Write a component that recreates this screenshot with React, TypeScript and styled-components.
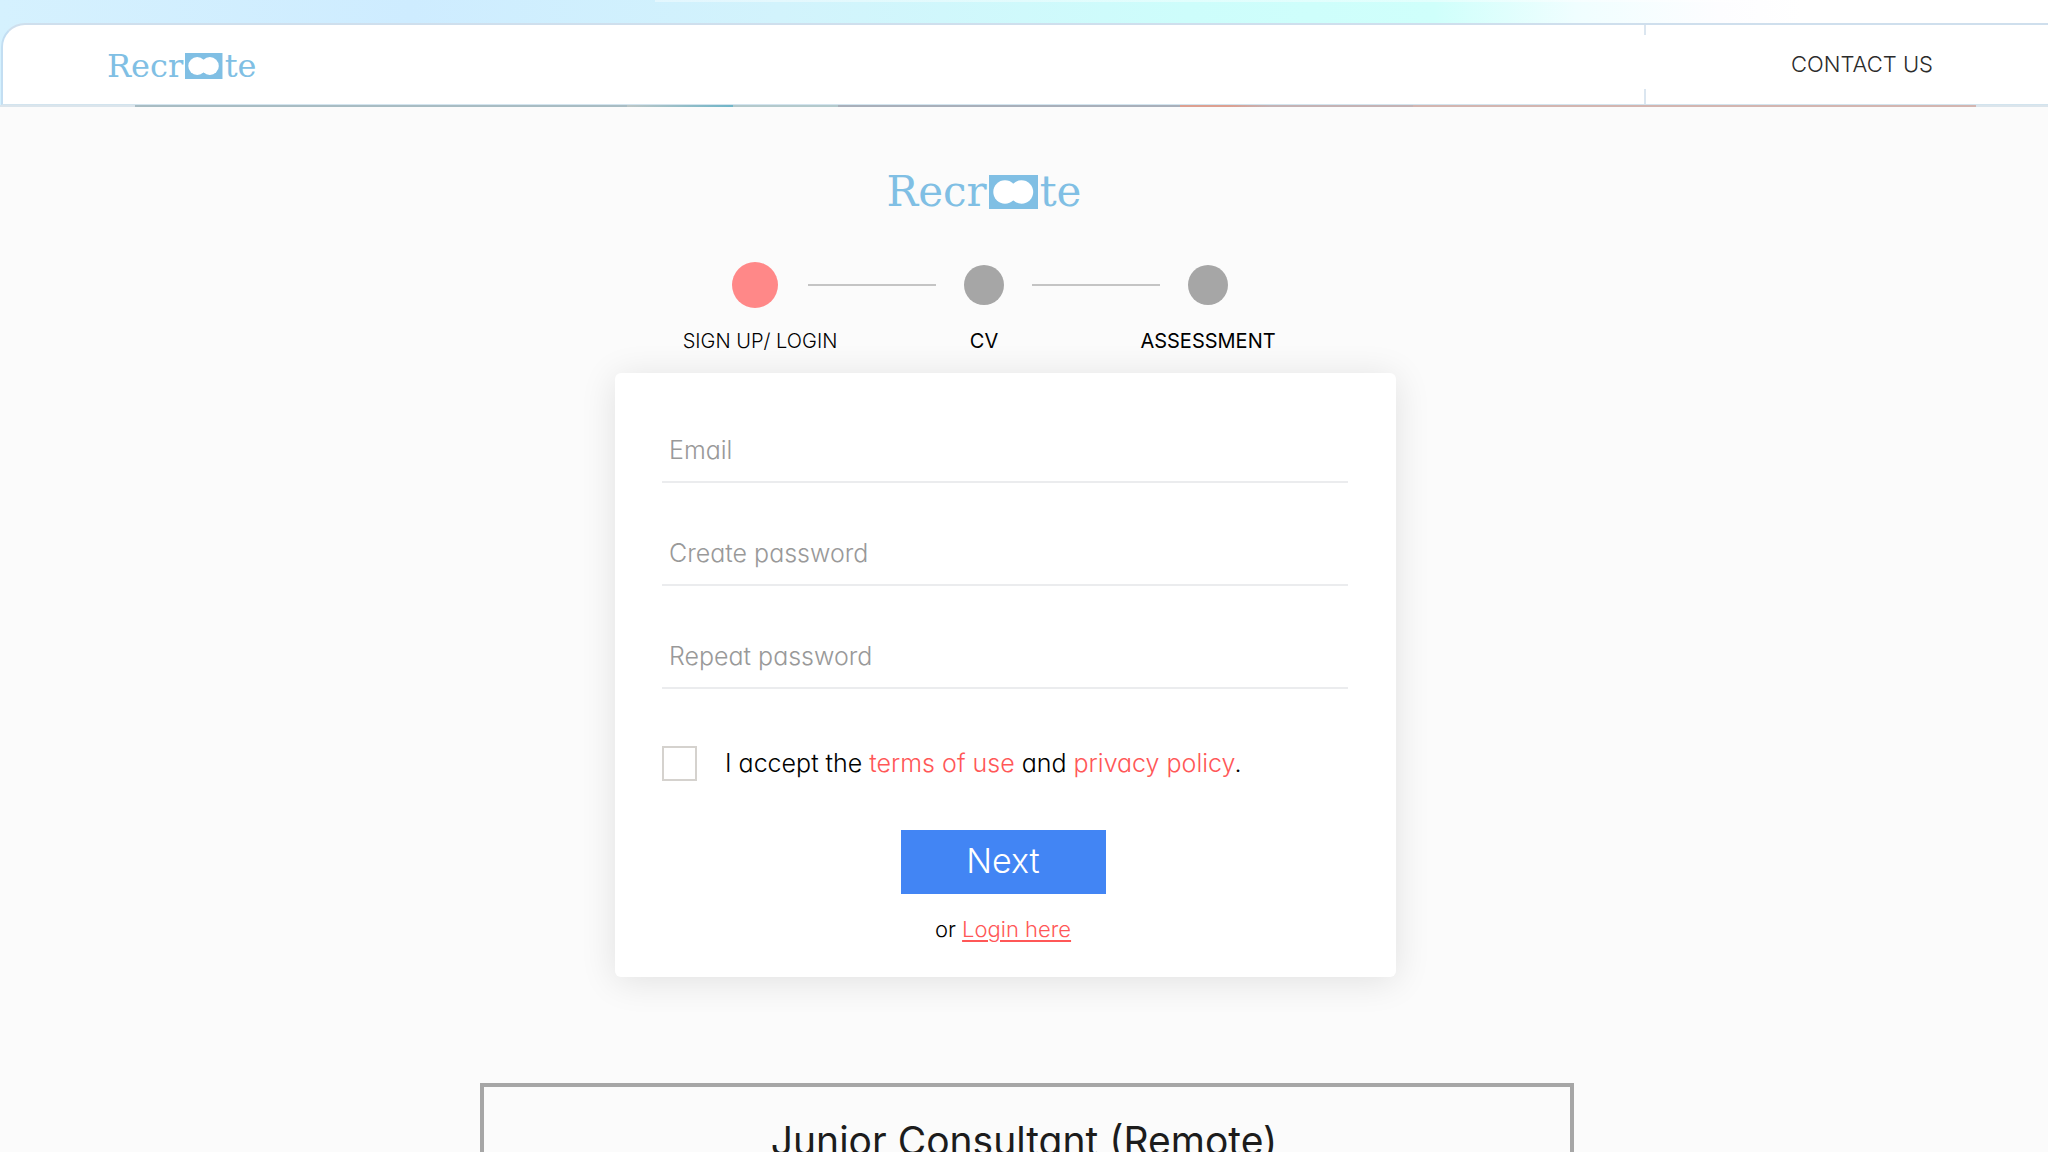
import React from "react";
import styled, { createGlobalStyle } from "styled-components";

const GlobalStyle = createGlobalStyle`
  *, *::before, *::after { box-sizing: border-box; }
  body {
    margin: 0;
    background: #fbfbfb;
    color: #111;
    font-family: Inter, "Open Sans", sans-serif;
    font-feature-settings: "cv11" 1;
    font-weight: 300;
  }
`;

const Header = styled.header`
  padding: 23px 0 0 1px;
  background:
    linear-gradient(rgba(255, 255, 255, 0.4), rgba(255, 255, 255, 0.4)) right top / 68% 2px no-repeat,
    linear-gradient(
      90deg,
      #d5f1fe 0%,
      #ceecff 20%,
      #d2f3fc 38%,
      #cdfdfb 58%,
      #cffffb 70%,
      #f0feff 77%,
      #fdfdff 84%,
      #fff 88%
    );
`;

const Bar = styled.div`
  display: flex;
  justify-content: space-between;
  height: 82px;
  padding-left: 104px;
  background: #fff;
  border-style: solid;
  border-width: 2px 0 1px 2px;
  border-color: #cfdfed #fff #d3e4ee #c3def2;
  border-top-left-radius: 24px;
`;

const HeaderEdge = styled.div`
  height: 2px;
  background: linear-gradient(
    90deg,
    #dbe5ec 0 6.6%,
    #a8bcc3 6.6% 30.6%,
    #bcc6c6 30.6%,
    #6fb5c8 35.8%,
    #b3c9cc 35.8% 40.9%,
    #a8afba 40.9% 57.6%,
    #dd9f90 57.6% 60%,
    #c4b2b4 62% 69%,
    #d3b5b0 69% 96.5%,
    #dbe5ec 96.5%
  );
`;

const Logo = styled.a<{ $size: number }>`
  display: inline-flex;
  align-items: center;
  gap: 2px;
  color: #80bfe4;
  font: 400 ${(p) => p.$size}px/1 "DejaVu Serif", serif;
  text-decoration: none;

  svg {
    display: block;
    height: ${(p) => (p.$size > 36 ? 34 : 26)}px;
  }
`;

const BarLogo = styled.div`
  display: flex;
  padding-top: 3px;
`;

const Contact = styled.nav`
  display: flex;
  align-items: center;
  padding: 0 115px 2px 147px;
  background:
    linear-gradient(#dbe6f0, #dbe6f0) left top / 2px 10px no-repeat,
    linear-gradient(#dbe6f0, #dbe6f0) left bottom / 2px 15px no-repeat;

  a {
    color: #2b2b2b;
    font-size: 22px;
    line-height: 28px;
    text-decoration: none;
  }
`;

const Intro = styled.section`
  display: flex;
  flex-direction: column;
  align-items: center;
  padding: 64px 80px 0 0;
`;

const Steps = styled.ol`
  display: grid;
  grid-template-columns: 96px 128px 96px 128px 96px;
  grid-template-rows: 48px 24px;
  row-gap: 20px;
  justify-items: center;
  align-items: center;
  margin: 48px 0 0;
  padding: 0;
  list-style: none;
`;

const Step = styled.li`
  display: contents;
`;

const Dot = styled.span<{ $active?: boolean }>`
  grid-row: 1;
  width: ${(p) => (p.$active ? 46 : 40)}px;
  height: ${(p) => (p.$active ? 46 : 40)}px;
  margin-right: ${(p) => (p.$active ? 10 : 0)}px;
  border-radius: 50%;
  background: ${(p) => (p.$active ? "#ff8888" : "#a6a6a6")};
`;

const StepLabel = styled.span<{ $column: number; $active?: boolean }>`
  grid-area: 2 / ${(p) => p.$column};
  color: #000;
  font-size: 20px;
  line-height: 24px;
  font-weight: ${(p) => (p.$active ? 300 : 400)};
  white-space: nowrap;
`;

const Connector = styled.li`
  grid-row: 1;
  width: 128px;
  height: 2px;
  background: #c4c4c4;
`;

const CardRow = styled.section`
  display: flex;
  justify-content: center;
  padding: 20px 37px 0 0;
`;

const Card = styled.form`
  width: 100%;
  max-width: 781px;
  padding: 46px 48px 34px 47px;
  border-radius: 6px;
  background: #fff;
  box-shadow: 0 4px 36px rgba(0, 0, 0, 0.11);
`;

const Field = styled.label`
  display: block;
  height: 64px;
  margin-bottom: 39px;
`;

const Input = styled.input`
  width: 100%;
  height: 64px;
  padding: 0 7px;
  border: 0;
  border-bottom: 2px solid #ebecee;
  background: transparent;
  color: #111;
  font: inherit;
  font-size: 25px;
  outline: none;

  &::placeholder {
    color: #999;
    opacity: 1;
  }
`;

const Consent = styled.div`
  display: flex;
  align-items: center;
  gap: 28px;
  margin-top: 56px;
  font-size: 25px;
  line-height: 36px;
  color: #000;
`;

const Checkbox = styled.input`
  appearance: none;
  flex: none;
  width: 35px;
  height: 35px;
  margin: 0;
  border: 2px solid #d5d2ce;
  background: #fff;

  &:checked {
    background: #4285f4;
  }
`;

const TextLink = styled.a<{ $underlined?: boolean }>`
  color: #ff5757;
  text-decoration: ${(p) => (p.$underlined ? "underline" : "none")};
  text-decoration-thickness: 2px;
  text-underline-offset: 3px;
`;

const Actions = styled.div`
  display: flex;
  flex-direction: column;
  align-items: center;
  gap: 21px;
  padding: 49px 4px 0 0;
`;

const NextButton = styled.button`
  width: 205px;
  height: 64px;
  padding: 0 0 4px;
  border: 0;
  background: #4285f4;
  color: #fff;
  font: inherit;
  font-size: 34px;
`;

const LoginLine = styled.p`
  margin: 0;
  color: #000;
  font-size: 22px;
  line-height: 28px;
`;

const JobRow = styled.section`
  display: flex;
  justify-content: center;
  padding: 106px 0 0 6px;
`;

const JobCard = styled.article`
  width: 100%;
  max-width: 1094px;
  padding: 32px 6px 32px 0;
  border: 4px solid #a6a6a6;
  text-align: center;
`;

const JobTitle = styled.h1`
  margin: 0;
  color: #1c1c1c;
  font-size: 39px;
  line-height: 44px;
  font-weight: 400;
`;

function RecrooteLogo({ size }: { size: number }) {
  return (
    <Logo href="#" $size={size}>
      <span>Recr</span>
      <svg viewBox="0 0 49 34" aria-hidden="true">
        <rect width="49" height="34" fill="#80bfe4" />
        <g fill="#fff">
          <circle cx="16" cy="17" r="11.7" />
          <circle cx="32.5" cy="17" r="11.7" />
        </g>
      </svg>
      <span>te</span>
    </Logo>
  );
}

const fields = [
  { name: "email", type: "email", label: "Email" },
  { name: "password", type: "password", label: "Create password" },
  { name: "repeat", type: "password", label: "Repeat password" },
];

export default function App() {
  return (
    <>
      <GlobalStyle />
      <Header>
        <Bar>
          <BarLogo>
            <RecrooteLogo size={32} />
          </BarLogo>
          <Contact>
            <a href="#contact">CONTACT US</a>
          </Contact>
        </Bar>
      </Header>
      <HeaderEdge />
      <main>
        <Intro>
          <RecrooteLogo size={42} />
          <Steps>
            <Step>
              <Dot $active />
              <StepLabel $column={1} $active>SIGN UP/ LOGIN</StepLabel>
            </Step>
            <Connector aria-hidden="true" />
            <Step>
              <Dot />
              <StepLabel $column={3}>CV</StepLabel>
            </Step>
            <Connector aria-hidden="true" />
            <Step>
              <Dot />
              <StepLabel $column={5}>ASSESSMENT</StepLabel>
            </Step>
          </Steps>
        </Intro>
        <CardRow>
          <Card onSubmit={(e) => e.preventDefault()}>
            {fields.map((f) => (
              <Field key={f.name}>
                <Input name={f.name} type={f.type} placeholder={f.label} aria-label={f.label} />
              </Field>
            ))}
            <Consent>
              <Checkbox type="checkbox" id="accept" />
              <label htmlFor="accept">
                I accept the <TextLink href="#terms">terms of use</TextLink> and{" "}
                <TextLink href="#privacy">privacy policy</TextLink>.
              </label>
            </Consent>
            <Actions>
              <NextButton type="submit">Next</NextButton>
              <LoginLine>
                or <TextLink href="#login" $underlined>Login here</TextLink>
              </LoginLine>
            </Actions>
          </Card>
        </CardRow>
        <JobRow>
          <JobCard>
            <JobTitle>Junior Consultant (Remote)</JobTitle>
          </JobCard>
        </JobRow>
      </main>
    </>
  );
}
